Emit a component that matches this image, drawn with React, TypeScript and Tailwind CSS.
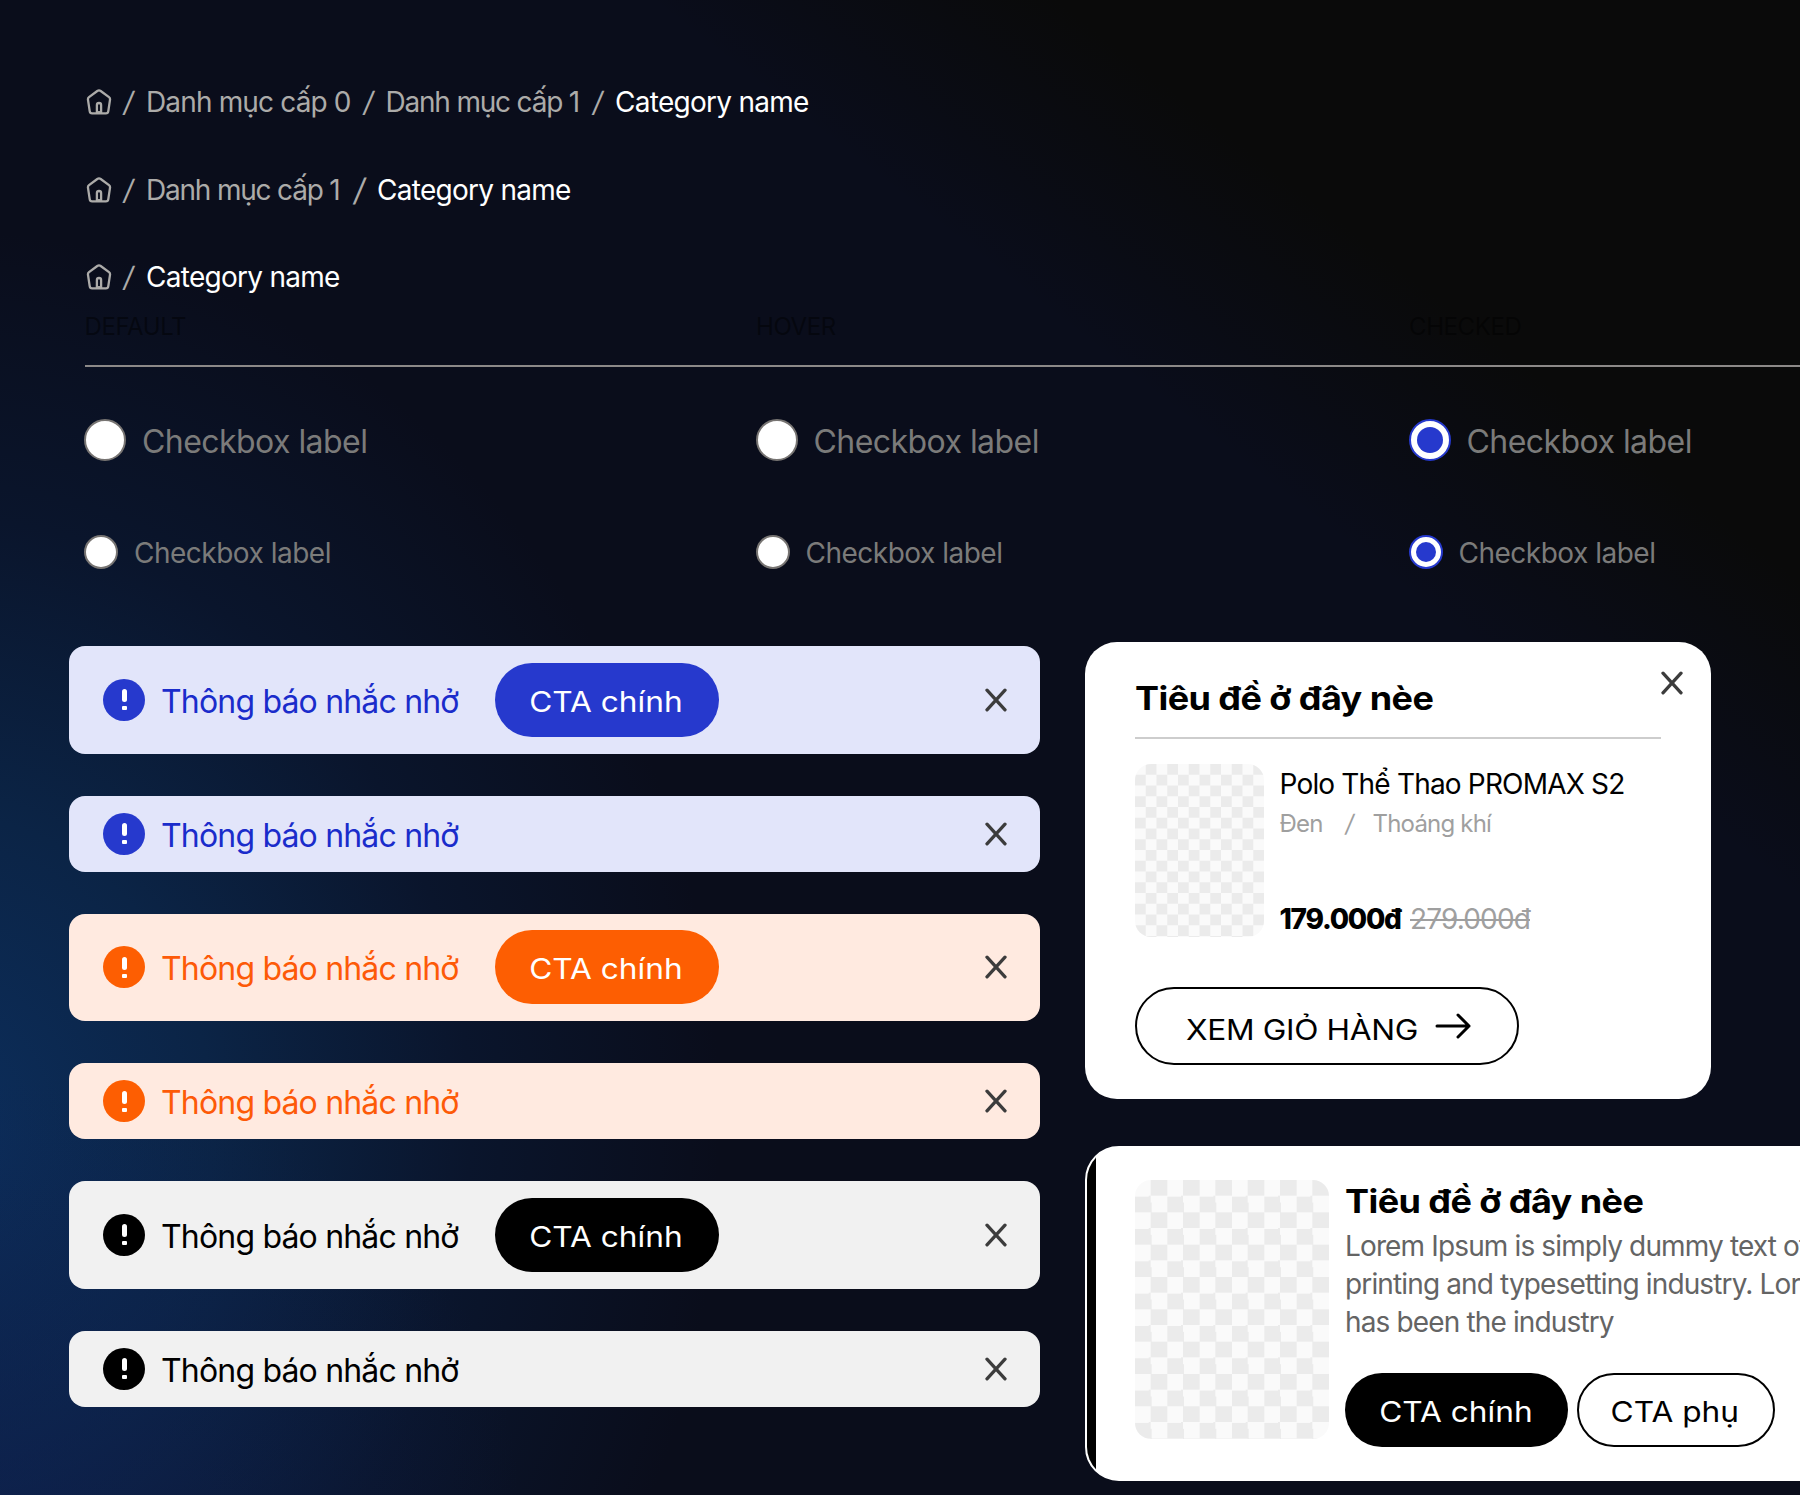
import clsx from "clsx";

type Tone = "blue" | "orange" | "black";

const tones: Record<Tone, { bar: string; text: string; fill: string }> = {
  blue: { bar: "bg-[#e2e5fa]", text: "text-[#1a2ccb]", fill: "bg-[#2639cd]" },
  orange: { bar: "bg-[#ffeae0]", text: "text-[#fd5a08]", fill: "bg-[#fd5e02]" },
  black: { bar: "bg-[#f1f1f1]", text: "text-black", fill: "bg-black" },
};

const alerts: { tone: Tone; cta: boolean }[] = [
  { tone: "blue", cta: true },
  { tone: "blue", cta: false },
  { tone: "orange", cta: true },
  { tone: "orange", cta: false },
  { tone: "black", cta: true },
  { tone: "black", cta: false },
];

function HomeIcon() {
  return (
    <svg
      className="h-[26px] w-[26px] shrink-0"
      fill="none"
      stroke="currentColor"
      strokeLinejoin="round"
      strokeWidth={2.3}
      viewBox="0 0 26 26"
    >
      <path d="M11.3 2q1.7-1.2 3.4 0L23 8.2q1.3 1 1 2.6L22.3 22.2q-.3 2.2-2.4 2.2H6.1q-2.1 0-2.4-2.2L2 10.8q-.3-1.6 1-2.6Z" />
      <path d="M10.9 24v-7.9a2.1 2.1 0 0 1 4.2 0v7.9" />
      <path d="M10 23.2h6" />
    </svg>
  );
}

function CloseIcon() {
  return (
    <svg
      className="h-6 w-[22px] shrink-0"
      fill="none"
      stroke="#3c3c3c"
      strokeLinecap="round"
      strokeWidth={3.3}
      viewBox="0 0 22 24"
    >
      <path d="M2 2.2l18 19.6M20 2.2L2 21.8" />
    </svg>
  );
}

function Slash({ className }: { className?: string }) {
  return (
    <span className={clsx("shrink-0 -skew-x-[9deg] text-center", className)}>
      /
    </span>
  );
}

function Category() {
  return (
    <span className="tracking-[-0.72px] text-white">Category name</span>
  );
}

function Radio({ checked, small }: { checked?: boolean; small?: boolean }) {
  return (
    <span
      className={clsx(
        "flex shrink-0 items-center justify-center rounded-full border-2 bg-white",
        small ? "h-[34px] w-[34px]" : "h-[42px] w-[42px]",
        checked ? "border-[#2639cd]" : "border-[#777472]"
      )}
    >
      {checked && (
        <span
          className={clsx(
            "rounded-full bg-[#2639cd]",
            small ? "h-5 w-5" : "h-[26px] w-[26px]"
          )}
        />
      )}
    </span>
  );
}

function RadioRow({ small, className }: { small?: boolean; className: string }) {
  return (
    <div
      className={clsx(
        "grid grid-cols-[671.5px_653px_1fr] pl-[84px] text-[#7b7b7a] leading-none",
        className
      )}
    >
      {[false, false, true].map((checked, i) => (
        <label
          className={clsx(
            "flex items-center gap-4",
            small
              ? "text-[28px] tracking-[-0.5px]"
              : "text-[32px] tracking-[-0.55px]"
          )}
          key={i}
        >
          <Radio checked={checked} small={small} />
          <span className={small ? "pt-[2px]" : "pt-[4px]"}>
            Checkbox label
          </span>
        </label>
      ))}
    </div>
  );
}

function Cta({ className, children }: { className: string; children: string }) {
  return (
    <button
      className={clsx(
        "flex h-[74px] shrink-0 items-center justify-center rounded-full pt-[4px] pr-[2px] text-[28px]",
        className
      )}
    >
      <span className="scale-x-[1.13] whitespace-nowrap">{children}</span>
    </button>
  );
}

function Alert({ tone, cta }: { tone: Tone; cta: boolean }) {
  const t = tones[tone];
  return (
    <div
      className={clsx(
        "flex items-center rounded-2xl pr-[33px] pl-[34px]",
        cta ? "h-[107.5px]" : "h-[76px]",
        t.bar
      )}
    >
      <span
        className={clsx(
          "flex h-[42px] w-[42px] shrink-0 flex-col items-center justify-center gap-1",
          "rounded-full",
          t.fill
        )}
      >
        <span className="h-[13px] w-[5px] rounded-full bg-white" />
        <span className="h-1 w-[5px] rounded-[1px] bg-white" />
      </span>
      <span
        className={clsx(
          "ml-4 w-[333.5px] whitespace-nowrap pt-[4px] text-[32px] tracking-[-0.82px]",
          t.text
        )}
      >
        Thông báo nhắc nhở
      </span>
      {cta && (
        <Cta className={clsx("w-[224px] text-white", t.fill)}>CTA chính</Cta>
      )}
      <span className="ml-auto">
        <CloseIcon />
      </span>
    </div>
  );
}

function Heading() {
  return (
    <h2 className="w-[300px] origin-left scale-x-[1.125] whitespace-nowrap font-bold text-[32px] text-black leading-10 tracking-[-0.5px]">
      Tiêu đề ở đây nèe
    </h2>
  );
}

export default function App() {
  return (
    <main
      className={clsx(
        "flex h-[1495px] w-[1800px] flex-col overflow-hidden font-['Inter',sans-serif]",
        "bg-[#0a0d1b]",
        "bg-[linear-gradient(218deg,#0a0a0a_0%,#0a0a0a_20%,#0a0a0a00_31%),radial-gradient(ellipse_520px_420px_at_0px_1495px,#10215680_0%,#10215600_100%),radial-gradient(ellipse_780px_900px_at_-60px_1130px,#0c2e5c_0%,#0b2446_35%,#0a152c_68%,#0a0d1b00_100%)]"
      )}
    >
      {/* Breadcrumbs */}
      <nav className="flex flex-col whitespace-nowrap pt-[81.5px] pl-[86px] text-[28px] text-[#acaba9]">
        <div className="flex h-10 items-center">
          <HomeIcon />
          <Slash className="w-[34px]" />
          <span className="w-[205.5px] tracking-[-0.85px]">
            Danh mục cấp 0
          </span>
          <Slash className="w-[34px]" />
          <span className="w-[195px] tracking-[-1.2px]">Danh mục cấp 1</span>
          <Slash className="w-[34.5px]" />
          <Category />
        </div>
        <div className="mt-[48.5px] flex h-10 items-center">
          <HomeIcon />
          <Slash className="w-[34px]" />
          <span className="w-[195.5px] tracking-[-1.2px]">
            Danh mục cấp 1
          </span>
          <Slash className="w-[35.5px] text-[31px]" />
          <Category />
        </div>
        <div className="mt-[46.5px] flex h-10 items-center">
          <HomeIcon />
          <Slash className="w-[34px]" />
          <Category />
        </div>
      </nav>

      {/* Radio states */}
      <section>
        <div className="ml-[84.5px] grid grid-cols-[671.5px_653px_1fr] border-[#8c8988] border-b-2 pt-[14px] pb-[22px] text-2xl text-black/45 leading-8 tracking-[-0.4px]">
          <span>DEFAULT</span>
          <span>HOVER</span>
          <span>CHECKED</span>
        </div>
        <RadioRow className="mt-[52.5px] h-[42px]" />
        <RadioRow className="mt-[74px] h-[34px]" small />
      </section>

      <div className="mt-[73px] flex items-start pl-[69px]">
        {/* Alerts */}
        <section className="mt-1 flex w-[971px] shrink-0 flex-col gap-[42px]">
          {alerts.map((alert, i) => (
            <Alert key={i} {...alert} />
          ))}
        </section>

        <section className="ml-[44.5px] flex shrink-0 flex-col gap-[46.5px]">
          {/* Mini cart */}
          <article className="h-[457px] w-[626.5px] rounded-[32px] bg-white pt-[29px] pr-[28px] pl-[50px]">
            <div className="flex justify-between">
              <div className="flex h-[68px] w-[526.5px] items-center border-[#cdcdcd] border-b-2 pb-[11px]">
                <Heading />
              </div>
              <CloseIcon />
            </div>
            <div className="mt-[25px] flex h-[173px] gap-4">
              <div className="w-[129px] rounded-2xl bg-[conic-gradient(#ebebeb_25%,#fafafa_0_50%,#ebebeb_0_75%,#fafafa_0)] bg-[length:21.5px_21.5px]" />
              <div className="flex flex-col whitespace-nowrap">
                <p className="h-10 text-[28px] text-black leading-10 tracking-[-0.82px]">
                  Polo Thể Thao PROMAX S2
                </p>
                <p className="flex h-[39px] items-center text-2xl text-[#9f9f9f] tracking-[-0.8px]">
                  <span className="w-[46px]">Đen</span>
                  <Slash className="w-[47px]" />
                  <span>Thoáng khí</span>
                </p>
                <p className="-mb-[1.5px] mt-auto flex h-10 items-center text-[28px]">
                  <span className="w-[130.5px] font-extrabold text-black tracking-[-1.25px]">
                    179.000đ
                  </span>
                  <s className="text-[#9f9f9f] tracking-[-0.85px] decoration-2">
                    279.000đ
                  </s>
                </p>
              </div>
            </div>
            <button className="mt-[50px] flex h-[78px] w-[384px] items-center rounded-full border-2 border-black pl-[49px] text-black">
              <span className="w-[249px] origin-left scale-x-[1.13] whitespace-nowrap pt-[7px] text-left text-[28px] tracking-[-0.3px]">
                XEM GIỎ HÀNG
              </span>
              <svg
                className="h-[26px] w-9"
                fill="none"
                stroke="currentColor"
                strokeLinecap="round"
                strokeLinejoin="round"
                strokeWidth={3}
                viewBox="0 0 36 26"
              >
                <path d="M2 13h32M23 2l11 11-11 11" />
              </svg>
            </button>
          </article>

          {/* Promo card */}
          <article className="flex h-[335.5px] w-[900px] overflow-hidden rounded-[34px] border-2 border-white bg-white">
            <div className="w-[9px] shrink-0 bg-black" />
            <div className="mt-8 ml-[39.5px] h-[259px] w-[194px] shrink-0 rounded-2xl bg-[conic-gradient(#ebebeb_25%,#fafafa_0_50%,#ebebeb_0_75%,#fafafa_0)] bg-[length:32.33px_32.33px]" />
            <div className="ml-4 pt-[34px]">
              <Heading />
              <p className="mt-[5px] whitespace-nowrap text-[#646464] text-[28px] leading-[38px] tracking-[-0.86px]">
                Lorem Ipsum is simply dummy text of
                <br />
                printing and typesetting industry. Lorem
                <br />
                has been the industry
              </p>
              <div className="mt-[32px] flex gap-[9px]">
                <Cta className="w-[223px] bg-black text-white">CTA chính</Cta>
                <Cta className="w-[198px] border-2 border-black text-black">
                  CTA phụ
                </Cta>
              </div>
            </div>
          </article>
        </section>
      </div>
    </main>
  );
}
